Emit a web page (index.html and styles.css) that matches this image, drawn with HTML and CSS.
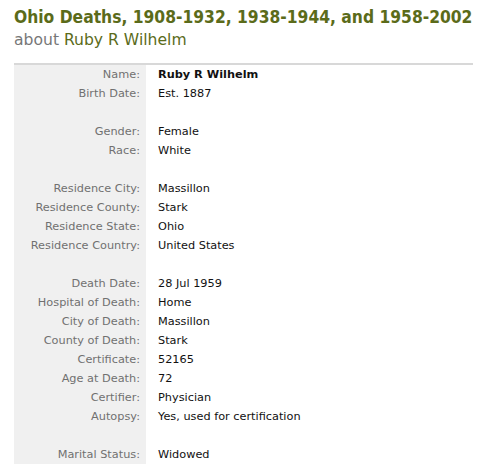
FILE: index.html
```html
<!DOCTYPE html>
<html lang="en">
<head>
    <meta charset="UTF-8">
    <title>Ohio Deaths - Ruby R Wilhelm</title>
    <link rel="stylesheet" href="styles.css">
</head>
<body>
    <div class="record">
        <h1 class="record-title">Ohio Deaths, 1908-1932, 1938-1944, and 1958-2002</h1>
        <h2 class="record-sub">about <span class="person">Ruby R Wilhelm</span></h2>

        <table class="record-table">
            <tr><td class="label">Name:</td><td class="value"><b>Ruby R Wilhelm</b></td></tr>
            <tr><td class="label">Birth Date:</td><td class="value">Est. 1887</td></tr>
            <tr class="spacer"><td class="label"></td><td class="value"></td></tr>
            <tr><td class="label">Gender:</td><td class="value">Female</td></tr>
            <tr><td class="label">Race:</td><td class="value">White</td></tr>
            <tr class="spacer"><td class="label"></td><td class="value"></td></tr>
            <tr><td class="label">Residence City:</td><td class="value">Massillon</td></tr>
            <tr><td class="label">Residence County:</td><td class="value">Stark</td></tr>
            <tr><td class="label">Residence State:</td><td class="value">Ohio</td></tr>
            <tr><td class="label">Residence Country:</td><td class="value">United States</td></tr>
            <tr class="spacer"><td class="label"></td><td class="value"></td></tr>
            <tr><td class="label">Death Date:</td><td class="value">28 Jul 1959</td></tr>
            <tr><td class="label">Hospital of Death:</td><td class="value">Home</td></tr>
            <tr><td class="label">City of Death:</td><td class="value">Massillon</td></tr>
            <tr><td class="label">County of Death:</td><td class="value">Stark</td></tr>
            <tr><td class="label">Certificate:</td><td class="value">52165</td></tr>
            <tr><td class="label">Age at Death:</td><td class="value">72</td></tr>
            <tr><td class="label">Certifier:</td><td class="value">Physician</td></tr>
            <tr><td class="label">Autopsy:</td><td class="value">Yes, used for certification</td></tr>
            <tr class="spacer"><td class="label"></td><td class="value"></td></tr>
            <tr><td class="label">Marital Status:</td><td class="value">Widowed</td></tr>
        </table>
    </div>
</body>
</html>
```

FILE: styles.css
```css
body {
    margin: 0;
    background: #fff;
    font-family: "DejaVu Sans", sans-serif;
}
.record {
    padding: 6px 14px 0 14px;
    width: 459px;
}
.record-title {
    margin: 0;
    font-family: "DejaVu Sans Condensed", "DejaVu Sans", sans-serif;
    font-size: 17.3px;
    font-weight: bold;
    color: #5b6b1a;
    line-height: 22px;
    white-space: nowrap;
}
.record-sub {
    margin: 1px 0 0 0;
    font-size: 15.6px;
    font-weight: normal;
    color: #777;
    line-height: 22px;
}
.person {
    color: #5b6b1a;
}
.record-table {
    margin-top: 12px;
    width: 100%;
    border-collapse: collapse;
    border-top: 2px solid #d8d8d8;
    font-size: 11.3px;
}
.record-table td {
    height: 19px;
    padding: 0;
    vertical-align: middle;
}
.label {
    width: 126px;
    padding-right: 6px !important;
    background: #f0f0f0;
    color: #707070;
    text-align: right;
}
.value {
    padding-left: 12px !important;
    color: #111;
}
```
